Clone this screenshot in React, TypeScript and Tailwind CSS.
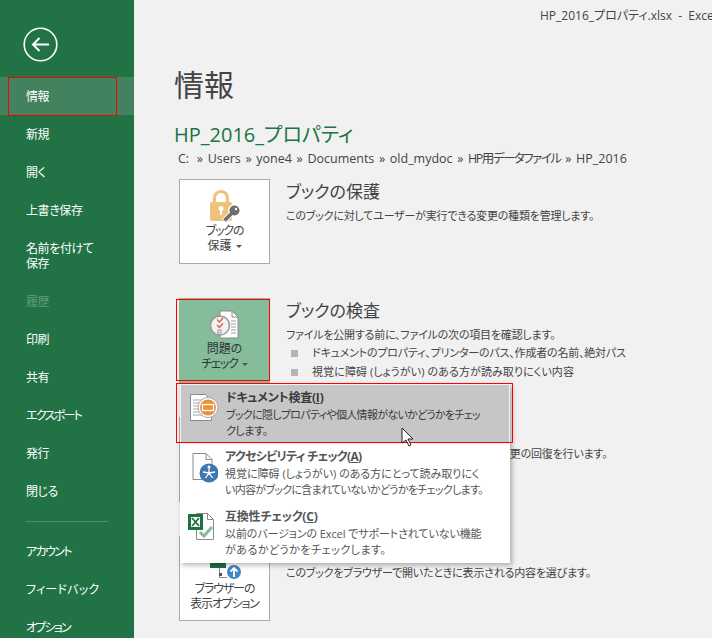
import React from "react";

function Nav({ label, h = "h-[38px]", dim = false, active = false, track = "tracking-[-0.4px]" }: { label: React.ReactNode; h?: string; dim?: boolean; active?: boolean; track?: string }) {
  return (
    <div className={`${h} flex items-center pl-[26px] text-[12px] leading-[15px] ${track} shrink-0 ${dim ? "text-[#5f9c7c]" : "text-white"} ${active ? "bg-[#43825e]" : ""}`}>
      {label}
    </div>
  );
}

function LockIcon() {
  return (
    <svg width="32" height="33" viewBox="0 0 32 33">
      <path d="M5.500 13V8a6.500 6.500 0 0 1 13 0v5" fill="none" stroke="#edc27a" strokeWidth="3" />
      <rect x="1" y="12" width="22" height="19" rx="2" fill="#edc27a" />
      <circle cx="12" cy="18.500" r="2.500" fill="#fff" />
      <rect x="11" y="19" width="2" height="6" fill="#fff" />
      <path d="M26 20L15 31" stroke="#f1f1f1" strokeWidth="6" />
      <circle cx="25.500" cy="20.500" r="6.500" fill="#fff" />
      <path d="M26 20L15.500 30.500" stroke="#6d6d6d" strokeWidth="3.500" />
      <circle cx="25.500" cy="20.500" r="5" fill="#6d6d6d" />
      <circle cx="27" cy="19" r="1.200" fill="#fff" />
    </svg>
  );
}

function InspectIcon() {
  return (
    <svg width="30" height="30" viewBox="0 0 30 30">
      <path d="M10 1h12l6 6v21H10z" fill="#fff" stroke="#8a8a8a" />
      <path d="M22 1v6h6" fill="none" stroke="#8a8a8a" />
      <path d="M21 11h5M21 14h5M21 17h5M21 20h5M21 23h5" stroke="#9a9a9a" />
      <circle cx="10" cy="15.500" r="9.500" fill="#f3f3f3" stroke="#9a9a9a" strokeWidth="1.6" />
      <path d="M7 9.500l2.500 2.500L13 8M7 15l2.500 2.500L13 13.500" fill="none" stroke="#e0603a" strokeWidth="1.400" />
      <rect x="8" y="20" width="3" height="3" fill="none" stroke="#9a9a9a" />
    </svg>
  );
}

function DocInspect() {
  return (
    <svg width="34" height="30" viewBox="0 0 34 30">
      <path d="M3.500 0.500h15l6 6v20h-21z" fill="#fff" stroke="#8a8a8a" />
      <path d="M6 6h10M6 9h6M6 12h6M6 15h6M6 18h6M6 21h10" stroke="#a5a5a5" />
      <circle cx="21" cy="13.500" r="10" fill="#fff" stroke="#a9a9a9" />
      <circle cx="21" cy="13.500" r="8" fill="#e8913f" />
      <rect x="15.500" y="10.500" width="11" height="6" fill="none" stroke="#fff" strokeWidth="1.300" />
    </svg>
  );
}

function AccessIcon() {
  return (
    <svg width="30" height="32" viewBox="0 0 30 32">
      <path d="M5 0.500h13l6 6v20H5z" fill="#fff" stroke="#8a8a8a" />
      <path d="M18 0.500v6h6" fill="none" stroke="#8a8a8a" />
      <circle cx="21" cy="20" r="9.500" fill="#3f77ad" />
      <circle cx="21" cy="14" r="1.500" fill="#fff" />
      <path d="M21 15.500v4.500M15 19l6 1 6-1M21 20l-3.500 5M21 20l3.500 5" stroke="#fff" strokeWidth="1.300" fill="none" />
    </svg>
  );
}

function CompatIcon() {
  return (
    <svg width="30" height="32" viewBox="0 0 30 32">
      <path d="M8.500 0.500h11l6 6v20h-17z" fill="#fff" stroke="#8a8a8a" />
      <path d="M19.500 0.500v6h6" fill="none" stroke="#8a8a8a" />
      <rect x="0" y="1" width="15" height="16" fill="#1e7145" />
      <rect x="3" y="4" width="9" height="10" fill="#fff" />
      <path d="M4 5l7 8M11 5l-7 8" stroke="#1e7145" strokeWidth="1.800" />
      <path d="M12 19l4 4 8-9" fill="none" stroke="#8db7a0" strokeWidth="3" />
    </svg>
  );
}

function BrowserIcon() {
  return (
    <svg width="48" height="26" viewBox="0 0 48 26">
      <path d="M18.500 13v9.500H26" fill="none" stroke="#8a8a8a" />
      <rect x="9" y="7" width="16" height="6" fill="#1e7145" />
      <rect x="18" y="18" width="3" height="3" fill="#555" />
      <circle cx="33" cy="17" r="7" fill="#3f87c5" />
      <path d="M33 22v-8M29.500 16.500l3.500-3.500 3.500 3.500" fill="none" stroke="#fff" strokeWidth="1.800" />
    </svg>
  );
}

function Caret() {
  return <span className="inline-block align-middle ml-[4px] w-0 h-0 border-x-[3px] border-x-transparent border-t-[3px] border-t-[#555]" />;
}

function Bullet({ text, track }: { text: string; track: string }) {
  return (
    <div className={`flex items-center h-[19px] ml-[5px] text-[11px] ${track} text-[#444] whitespace-nowrap`}>
      <span className="w-[7px] h-[7px] bg-[#b4b4b4] mr-[14px] shrink-0" />
      {text}
    </div>
  );
}

function Section({ button, btnClass, title, desc, children }: { button: React.ReactNode; btnClass: string; title: string; desc: string; children?: React.ReactNode }) {
  return (
    <div className="flex h-[85px] mb-[34px]">
      <div className={`w-[91px] h-[85px] flex flex-col items-center shrink-0 text-[12px] leading-[15px] text-center tracking-[-1.200px] ${btnClass}`}>{button}</div>
      <div className="ml-[16px] min-w-0">
        <div className="text-[17px] leading-[24px] pt-[1px] h-[25px] text-[#444] whitespace-nowrap">{title}</div>
        <div className="text-[11px] tracking-[-0.2px] leading-[16px] mt-[4px] mb-[1px] text-[#444] whitespace-nowrap">{desc}</div>
        {children}
      </div>
    </div>
  );
}

function MenuItem({ icon, title, k, lines, active, titleTrack = "tracking-[-0.2px]" }: { icon: React.ReactNode; title: string; k: string; lines: [string, string][]; active?: boolean; titleTrack?: string }) {
  return (
    <div className={`flex ${active ? "bg-[#c6c6c6] border border-[#f1f1f1] h-[60px] text-[#3a3a3a]" : "h-[59.500px] text-[#555]"}`}>
      <div className="w-[45px] shrink-0 flex justify-center pt-[9px]">{icon}</div>
      <div className="pt-[4px]">
        <div className={`text-[12px] leading-[18px] font-bold ${titleTrack} whitespace-nowrap`}>
          {title}(<span className="underline">{k}</span>)
        </div>
        {lines.map(([l, t]) => (
          <div key={l} className={`text-[11px] leading-[16px] ${t} whitespace-nowrap`}>{l}</div>
        ))}
      </div>
    </div>
  );
}

export default function App() {
  return (
    <div className="relative flex w-[712px] h-[638px] overflow-hidden bg-[#f1f1f1] font-['Open_Sans','Noto_Sans_CJK_JP',sans-serif] [font-feature-settings:'palt']">
      <aside className="w-[134px] shrink-0 bg-[#217346] flex flex-col">
        <div className="h-[77px] shrink-0 pl-[23px] pt-[27px]">
          <svg width="35" height="35" viewBox="0 0 35 35">
            <circle cx="17.500" cy="17.500" r="16.300" fill="none" stroke="#fff" strokeWidth="1.600" />
            <path d="M10 17.500h16M16.500 11l-6.500 6.500 6.500 6.500" fill="none" stroke="#fff" strokeWidth="2" />
          </svg>
        </div>
        <Nav label="情報" active />
        <Nav label="新規" />
        <Nav label="開く" />
        <Nav label="上書き保存" />
        <Nav label={<span>名前を付けて<br />保存</span>} h="h-[53px]" />
        <Nav label="履歴" dim />
        <Nav label="印刷" />
        <Nav label="共有" />
        <Nav label="エクスポート" track="tracking-[-1.700px]" />
        <Nav label="発行" />
        <Nav label="閉じる" />
        <div className="h-[22px] shrink-0 flex items-center pl-[26px]"><div className="w-[82px] h-px bg-[#4b8f6b]" /></div>
        <Nav label="アカウント" track="tracking-[-1.600px]" />
        <Nav label="フィードバック" track="tracking-[0.200px]" />
        <Nav label="オプション" track="tracking-[-1.800px]" />
      </aside>

      <main className="relative flex-1 min-w-0 overflow-hidden">
        <div className="h-[30px] pt-[8px] pl-[406px] text-[12px] leading-[15px] text-[#444] whitespace-nowrap">HP_2016_プロパティ.xlsx&nbsp;&nbsp;-&nbsp;&nbsp;Excel</div>
        <div className="ml-[40px] mt-[35px] text-[30px] leading-[40px] text-[#444]">情報</div>
        <div className="ml-[40px] mt-[16px] text-[20px] leading-[27px] text-[#217346] whitespace-nowrap">HP_2016_プロパティ</div>
        <div className="ml-[44px] mt-[3px] text-[12.500px] leading-[16px] text-[#444] whitespace-nowrap [word-spacing:1.400px]">
          <span className="mr-[3px]">C:</span> » Users » yone4 » Documents » old_mydoc » <span className="tracking-[-1.500px]">HP用データファイル</span> » HP_2016
        </div>

        <div className="mt-[12px] ml-[45px]">
          <Section
            btnClass="bg-white border border-[#ababab] pt-[10px] text-[#444]"
            button={<><LockIcon /><div>ブックの<br /><span className="tracking-normal">保護</span><Caret /></div></>}
            title="ブックの保護"
            desc="このブックに対してユーザーが実行できる変更の種類を管理します。"
          />
          <Section
            btnClass="bg-[#85bd9b] pt-[12px] text-[#333]"
            button={<><InspectIcon /><div className="mt-[1px]"><span className="tracking-normal">問題の</span><br />チェック<Caret /></div></>}
            title="ブックの検査"
            desc="ファイルを公開する前に、ファイルの次の項目を確認します。"
          >
            <Bullet track="tracking-[-0.2px]" text="ドキュメントのプロパティ、プリンターのパス、作成者の名前、絶対パス" />
            <Bullet track="tracking-[0.1px]" text="視覚に障碍 (しょうがい) のある方が読み取りにくい内容" />
          </Section>
          <Section
            btnClass="bg-white border border-[#ababab] pt-[10px] text-[#444]"
            button={<div className="mt-[42px]">ブックの<br />管理<Caret /></div>}
            title="ブックの管理"
            desc="チェックイン、チェックアウト、保存されていない変更の回復を行います。"
          />
          <Section
            btnClass="bg-white border border-[#ababab] text-[#444]"
            button={<><div className="mt-[18px]"><BrowserIcon /></div><div>ブラウザーの<br />表示オプション</div></>}
            title="ブラウザーの表示オプション"
            desc="このブックをブラウザーで開いたときに表示される内容を選びます。"
          />
        </div>
      </main>

      {/* dropdown menu */}
      <div className="absolute left-[180px] top-[384px] w-[330px] h-[179px] bg-white shadow-[2px_2px_5px_rgba(0,0,0,0.3)]">
        <MenuItem
          icon={<DocInspect />}
          title="ドキュメント検査"
          k="I"
          lines={[["ブックに隠しプロパティや個人情報がないかどうかをチェッ", "tracking-[-0.7px]"], ["クします。", "tracking-[-0.4px]"]]}
          active
        />
        <MenuItem
          icon={<AccessIcon />}
          title="アクセシビリティ チェック"
          k="A"
          titleTrack="tracking-[-0.7px]"
          lines={[["視覚に障碍 (しょうがい) のある方にとって読み取りにく", "tracking-normal"], ["い内容がブックに含まれていないかどうかをチェックします。", "tracking-[-0.7px]"]]}
        />
        <MenuItem
          icon={<CompatIcon />}
          title="互換性チェック"
          k="C"
          lines={[["以前のバージョンの Excel でサポートされていない機能", "tracking-[-0.1px]"], ["があるかどうかをチェックします。", "tracking-[0.5px]"]]}
        />
      </div>

      {/* annotations */}
      <div className="absolute left-[8px] top-[77px] w-[109px] h-[39px] border border-[#ff0000]" />
      <div className="absolute left-[176px] top-[299px] w-[94px] h-[82px] border border-[#ff0000]" />
      <div className="absolute left-[176px] top-[383px] w-[337px] h-[60px] border border-[#ff0000]" />

      {/* cursor */}
      <svg className="absolute left-[401px] top-[427px]" width="14" height="20" viewBox="0 0 14 20">
        <path d="M1 1v15l4-3 3 6 2-1-3-6h5z" fill="#fff" stroke="#222" />
      </svg>
    </div>
  );
}
